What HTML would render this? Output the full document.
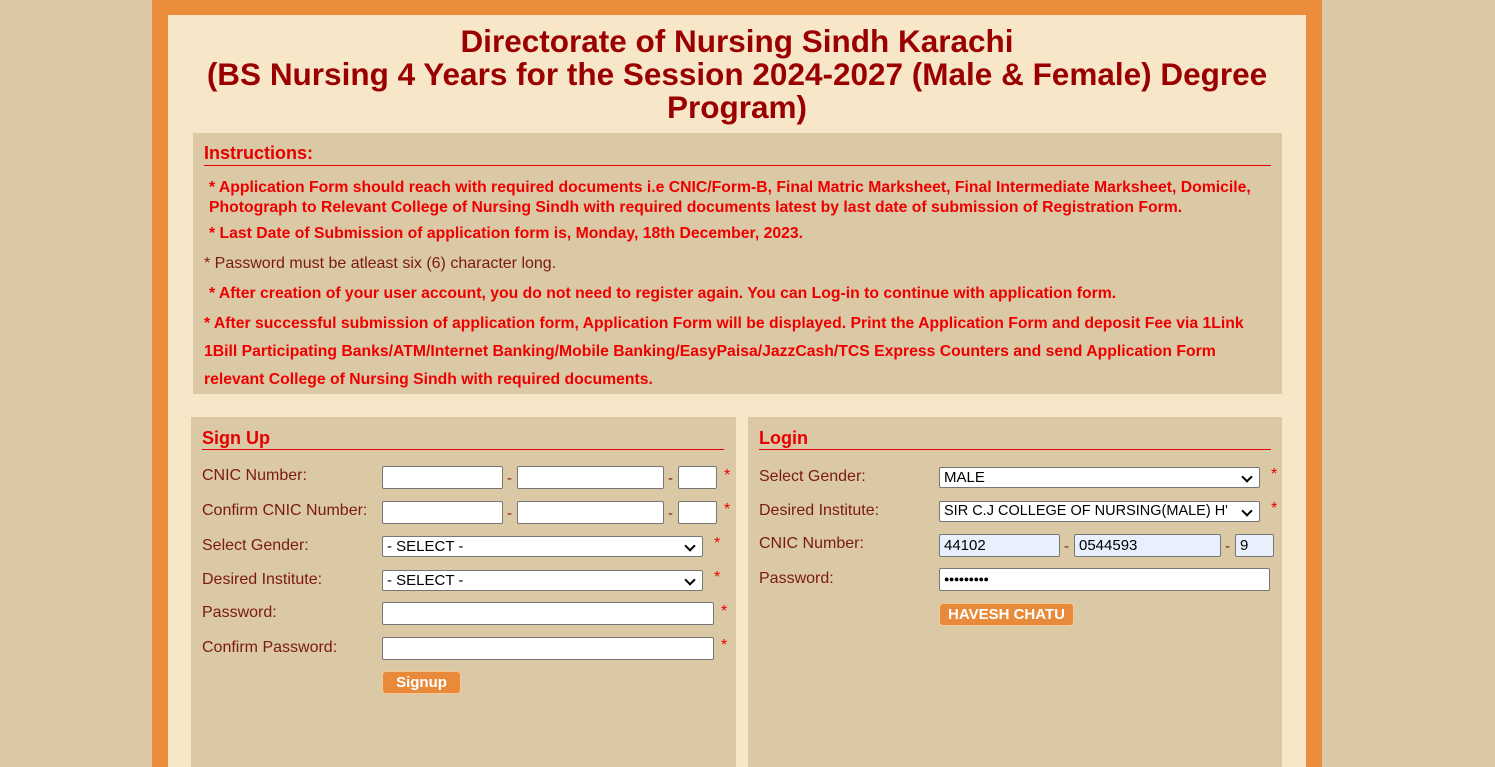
<!DOCTYPE html>
<html><head><style>
html,body{margin:0;width:1495px;height:767px;overflow:hidden}
body{background:#dbc8a5;font-family:"Liberation Sans",Arial,sans-serif;position:relative}
.a{position:absolute}
#outer{left:152px;top:0;width:1170px;height:767px;background:#eb8c3b}
#inner{left:168px;top:15px;width:1138px;height:752px;background:#f8e6c9}
h1{position:absolute;left:168px;width:1138px;top:25px;margin:0;text-align:center;color:#9a0000;font-size:31.5px;line-height:33px;font-weight:bold}
.box{background:#dbc8a5;position:absolute}
.hd{color:#e60000;font-weight:bold;font-size:18px;position:absolute;border-bottom:1px solid #e60000}
.r{color:#ee0000;font-weight:bold;font-size:15.75px;position:absolute;white-space:nowrap}
.n{color:#7a1a10;font-size:16px;position:absolute;white-space:nowrap}
.lb{color:#7a1a10;font-size:16px;position:absolute}
.in{position:absolute;height:22px;box-sizing:border-box;border:1px solid #777;background:#fff;border-radius:2px;font-size:15px;padding:2px 4px;font-family:"Liberation Sans",sans-serif}
.blue{background:#e8f0fe}
.st{position:absolute;color:#e00;font-size:16px}
.sel::after{content:"";position:absolute;right:8px;top:5px;width:6px;height:6px;border-right:2px solid #000;border-bottom:2px solid #000;transform:rotate(45deg)}
.dash{position:absolute;color:#7a1a10;font-size:15px}
.btn{position:absolute;background:#e98a3a;border:1px solid #f6c795;border-radius:4px;color:#fff;font-weight:bold;font-size:15px;text-align:center;box-sizing:border-box;line-height:21px}
</style></head><body>
<div class="a" id="outer"></div>
<div class="a" id="inner"></div>
<h1>Directorate of Nursing Sindh Karachi<br>(BS Nursing 4 Years for the Session 2024-2027 (Male &amp; Female) Degree<br>Program)</h1>
<div class="box" style="left:193px;top:133px;width:1089px;height:261px"></div>
<div class="hd" style="left:204px;top:143px;width:1067px;height:22px">Instructions:</div>
<div class="r" style="left:209px;top:178px;line-height:20px">* Application Form should reach with required documents i.e CNIC/Form-B, Final Matric Marksheet, Final Intermediate Marksheet, Domicile,<br>Photograph to Relevant College of Nursing Sindh with required documents latest by last date of submission of Registration Form.</div>
<div class="r" style="left:209px;top:225px">* Last Date of Submission of application form is, Monday, 18th December, 2023.</div>
<div class="n" style="left:204px;top:255px">* Password must be atleast six (6) character long.</div>
<div class="r" style="left:209px;top:285px">* After creation of your user account, you do not need to register again. You can Log-in to continue with application form.</div>
<div class="r" style="left:204px;top:310px;line-height:28px">* After successful submission of application form, Application Form will be displayed. Print the Application Form and deposit Fee via 1Link<br>1Bill Participating Banks/ATM/Internet Banking/Mobile Banking/EasyPaisa/JazzCash/TCS Express Counters and send Application Form<br>relevant College of Nursing Sindh with required documents.</div>

<div class="box" style="left:191px;top:417px;width:545px;height:350px"></div>
<div class="hd" style="left:202px;top:428px;width:522px;height:21px">Sign Up</div>
<div class="lb" style="left:202px;top:467px">CNIC Number:</div>
<div class="in" style="left:382px;top:466px;width:121px;height:23px"></div><span class="dash" style="left:507px;top:470px">-</span>
<div class="in" style="left:517px;top:466px;width:147px;height:23px"></div><span class="dash" style="left:668px;top:470px">-</span>
<div class="in" style="left:678px;top:466px;width:39px;height:23px"></div><span class="st" style="left:724px;top:467px">*</span>
<div class="lb" style="left:202px;top:502px">Confirm CNIC Number:</div>
<div class="in" style="left:382px;top:501px;width:121px;height:23px"></div><span class="dash" style="left:507px;top:505px">-</span>
<div class="in" style="left:517px;top:501px;width:147px;height:23px"></div><span class="dash" style="left:668px;top:505px">-</span>
<div class="in" style="left:678px;top:501px;width:39px;height:23px"></div><span class="st" style="left:724px;top:501px">*</span>
<div class="lb" style="left:202px;top:537px">Select Gender:</div>
<div class="in sel" style="left:382px;top:536px;width:321px;height:21px;padding-top:1px">- SELECT -</div><span class="st" style="left:714px;top:535px">*</span>
<div class="lb" style="left:202px;top:571px">Desired Institute:</div>
<div class="in sel" style="left:382px;top:570px;width:321px;height:21px;padding-top:1px">- SELECT -</div><span class="st" style="left:714px;top:569px">*</span>
<div class="lb" style="left:202px;top:604px">Password:</div>
<div class="in" style="left:382px;top:602px;width:332px;height:23px"></div><span class="st" style="left:721px;top:603px">*</span>
<div class="lb" style="left:202px;top:639px">Confirm Password:</div>
<div class="in" style="left:382px;top:637px;width:332px;height:23px"></div><span class="st" style="left:721px;top:637px">*</span>
<div class="btn" style="left:382px;top:671px;width:79px;height:23px">Signup</div>

<div class="box" style="left:748px;top:417px;width:534px;height:350px"></div>
<div class="hd" style="left:759px;top:428px;width:512px;height:21px">Login</div>
<div class="lb" style="left:759px;top:468px">Select Gender:</div>
<div class="in sel" style="left:939px;top:467px;width:321px;height:21px;padding-top:1px">MALE</div><span class="st" style="left:1271px;top:466px">*</span>
<div class="lb" style="left:759px;top:502px">Desired Institute:</div>
<div class="in sel" style="left:939px;top:501px;width:321px;height:21px;padding-top:1px;font-size:14.5px;white-space:nowrap;overflow:hidden">SIR C.J COLLEGE OF NURSING(MALE) H'</div><span class="st" style="left:1271px;top:500px">*</span>
<div class="lb" style="left:759px;top:535px">CNIC Number:</div>
<div class="in blue" style="left:939px;top:534px;width:121px;height:23px">44102</div><span class="dash" style="left:1064px;top:538px">-</span>
<div class="in blue" style="left:1074px;top:534px;width:147px;height:23px">0544593</div><span class="dash" style="left:1225px;top:538px">-</span>
<div class="in blue" style="left:1235px;top:534px;width:39px;height:23px">9</div>
<div class="lb" style="left:759px;top:570px">Password:</div>
<div class="in" style="left:939px;top:568px;width:331px;height:23px;font-size:9px;letter-spacing:-0.5px;padding-top:5px">●●●●●●●●●</div>
<div class="btn" style="left:939px;top:603px;width:135px;height:23px">HAVESH CHATU</div>
</body></html>
